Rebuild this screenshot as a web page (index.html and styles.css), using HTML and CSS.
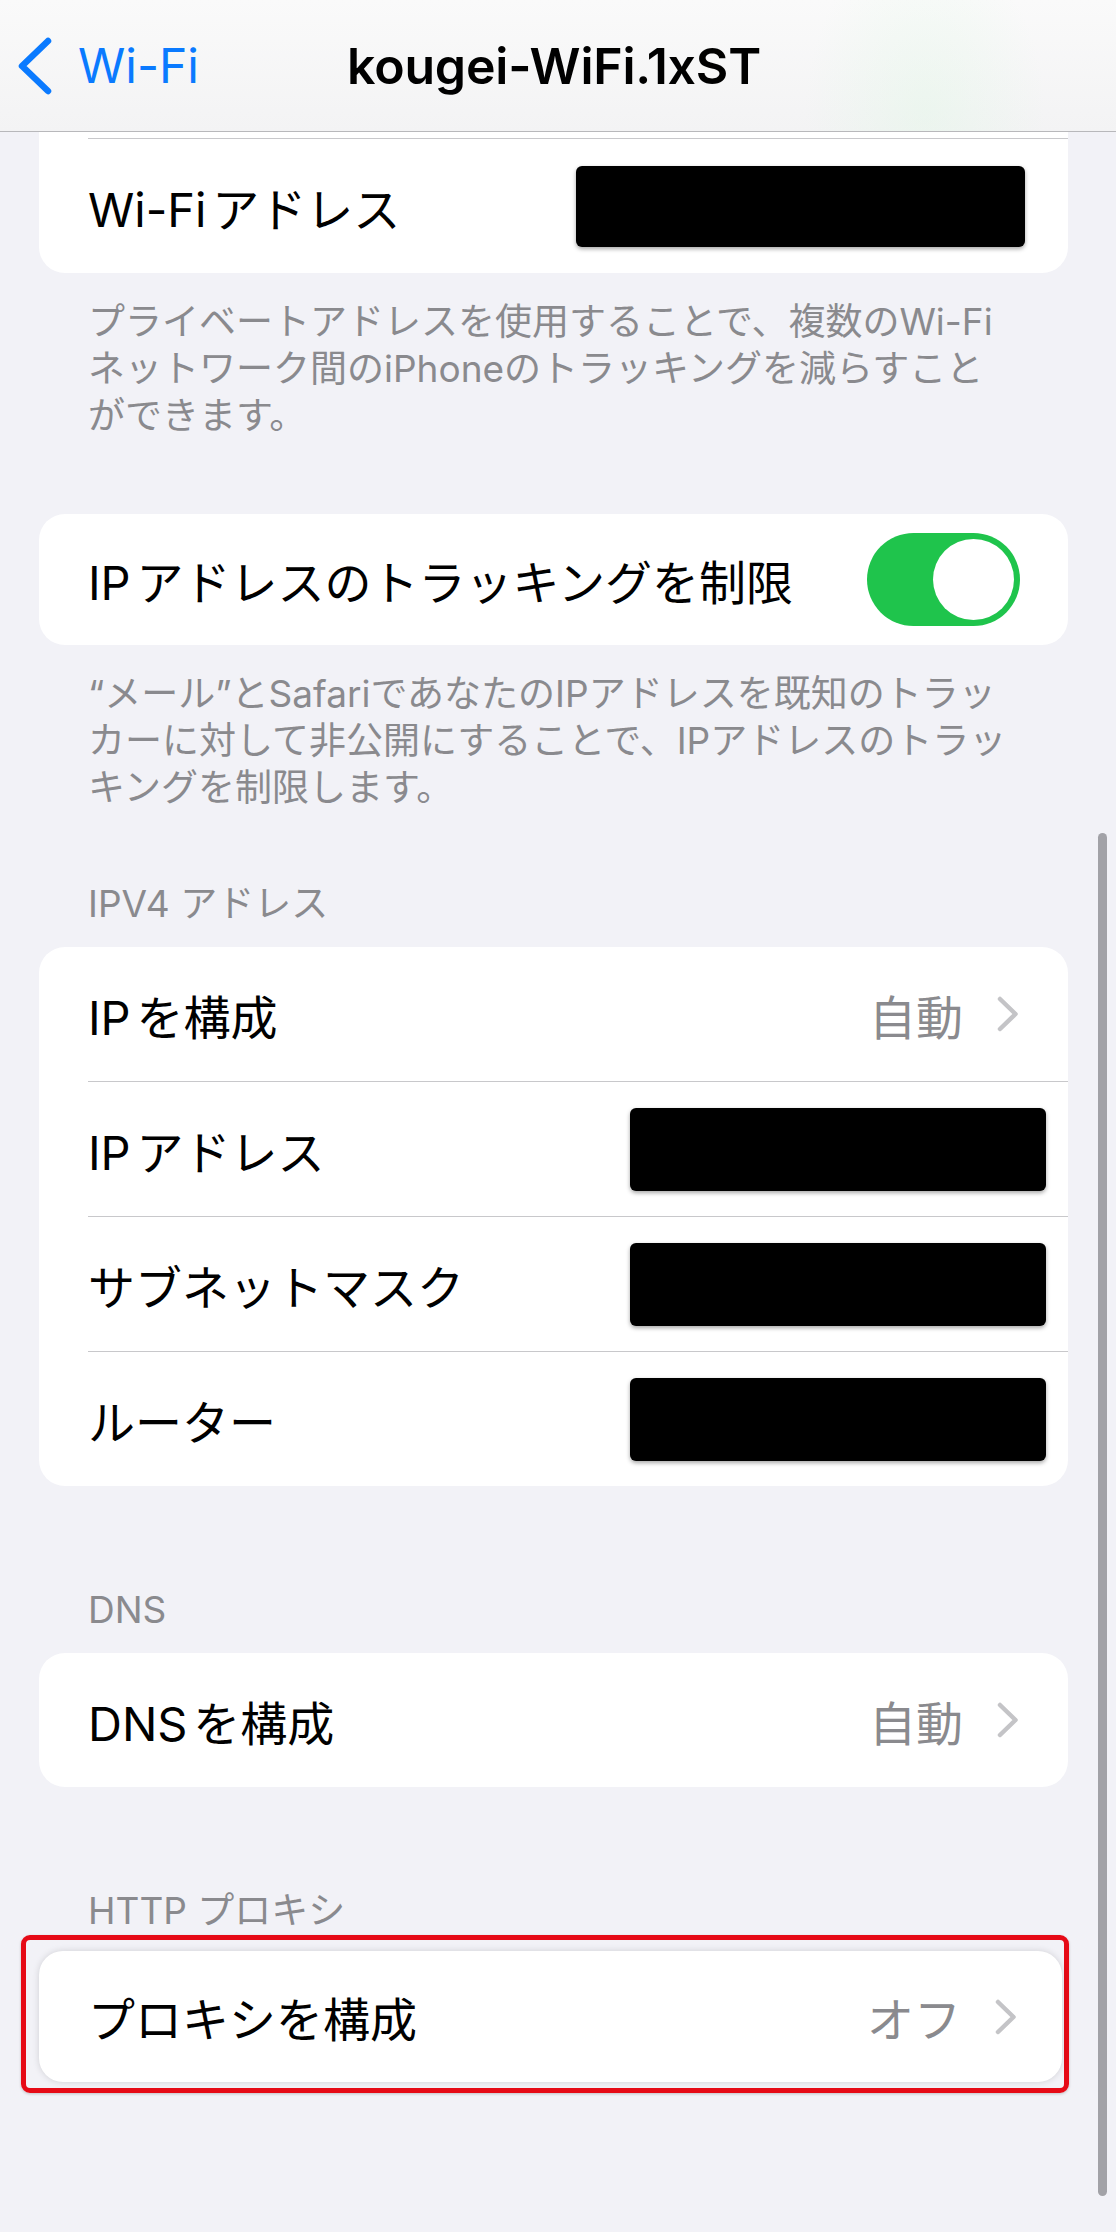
FILE: index.html
```html
<!DOCTYPE html>
<html lang="ja">
<head>
    <meta charset="UTF-8">
    <meta name="viewport" content="width=device-width, initial-scale=1.0">
    <title>kougei-WiFi.1xST</title>
    <link rel="stylesheet" href="styles.css">
</head>
<body>
    <header class="navbar">
        <a class="back" href="#">
            <svg class="back-icon" width="36" height="58" viewBox="0 0 36 58"><path d="M31 4 L5 29 L31 54"/></svg>
            <span>Wi-Fi</span>
        </a>
        <h1 class="title">kougei-WiFi.1xST</h1>
    </header>

    <main class="content">
        <section class="section">
            <div class="group group-cut">
                <div class="row">
                    <span class="label">Wi-Fiアドレス</span>
                    <span class="redact redact-wide"></span>
                </div>
            </div>
            <p class="note">プライベートアドレスを使用することで、複数のWi-Fi<br>ネットワーク間のiPhoneのトラッキングを減らすこと<br>ができます。</p>
        </section>

        <section class="section after-note first-note">
            <div class="group">
                <div class="row row-toggle">
                    <span class="label">IPアドレスのトラッキングを制限</span>
                    <span class="switch"><span class="knob"></span></span>
                </div>
            </div>
            <p class="note">“メール”とSafariであなたのIPアドレスを既知のトラッ<br>カーに対して非公開にすることで、IPアドレスのトラッ<br>キングを制限します。</p>
        </section>

        <section class="section after-note">
            <h2 class="header">IPV4 アドレス</h2>
            <div class="group">
                <div class="row">
                    <span class="label">IPを構成</span>
                    <span class="value">自動</span>
                    <svg class="chevron" width="22" height="36" viewBox="0 0 22 36"><path d="M3 3 L18.5 18 L3 33"/></svg>
                </div>
                <div class="row">
                    <span class="label">IPアドレス</span>
                    <span class="redact"></span>
                </div>
                <div class="row">
                    <span class="label">サブネットマスク</span>
                    <span class="redact"></span>
                </div>
                <div class="row">
                    <span class="label">ルーター</span>
                    <span class="redact"></span>
                </div>
            </div>
        </section>

        <section class="section">
            <h2 class="header">DNS</h2>
            <div class="group">
                <div class="row">
                    <span class="label">DNSを構成</span>
                    <span class="value">自動</span>
                    <svg class="chevron" width="22" height="36" viewBox="0 0 22 36"><path d="M3 3 L18.5 18 L3 33"/></svg>
                </div>
            </div>
        </section>

        <section class="section">
            <h2 class="header header-marked">HTTP プロキシ</h2>
            <div class="highlight">
                <div class="group group-marked">
                    <div class="row row-toggle">
                        <span class="label">プロキシを構成</span>
                        <span class="value">オフ</span>
                        <svg class="chevron" width="22" height="36" viewBox="0 0 22 36"><path d="M3 3 L18.5 18 L3 33"/></svg>
                    </div>
                </div>
            </div>
        </section>
    </main>

    <div class="scrollbar"></div>
</body>
</html>
```

FILE: styles.css
```css
* {
    box-sizing: border-box;
}

body {
    margin: 0;
    width: 1116px;
    height: 2232px;
    overflow: hidden;
    position: relative;
    background-color: #f2f2f7;
    font-family: Inter, "Noto Sans CJK JP", sans-serif;
    color: #000;
}

/* nav bar */
.navbar {
    height: 132px;
    border-bottom: 1px solid #b8b8bb;
    background:
        radial-gradient(ellipse 120px 170px at 925px 110px, rgba(220, 248, 226, 0.35), rgba(220, 248, 226, 0)),
        linear-gradient(#fafafa, #f3f3f4);
    display: grid;
    grid-template-columns: 1fr auto 1fr;
    align-items: center;
}

.back {
    display: flex;
    align-items: center;
    gap: 25px;
    padding-left: 17px;
    color: #0a7aff;
    text-decoration: none;
    font-size: 48px;
}

.back-icon path {
    fill: none;
    stroke: #0a7aff;
    stroke-width: 6.5;
    stroke-linecap: round;
    stroke-linejoin: round;
}

.title {
    margin: 0 0 0 -8px;
    font-size: 50px;
    font-weight: 600;
    letter-spacing: -0.2px;
}

/* list */
.content {
    padding: 0 48px 0 39px;
}

.section {
    margin-top: 100px;
}

.section:first-child {
    margin-top: 0;
}

.section.after-note {
    margin-top: 69px;
}

.section.first-note {
    margin-top: 75px;
}

.header {
    margin: 0;
    padding: 0 0 20px 49px;
    font-size: 37px;
    line-height: 47px;
    font-weight: 400;
    color: #8a8a8e;
}

.header-marked {
    padding-bottom: 1px;
}

.group {
    background-color: #fff;
    border-radius: 26px;
    overflow: hidden;
}

.group-cut {
    border-radius: 0 0 26px 26px;
    padding-top: 6px;
}

.row {
    display: flex;
    align-items: center;
    height: 134px;
    margin-left: 49px;
    padding-right: 22px;
    font-size: 47px;
}

.row + .row,
.group-cut .row {
    height: 135px;
    border-top: 1px solid #c8c8cb;
}

.row-toggle {
    height: 131px;
}

.label {
    flex: 1;
    text-autospace: normal;
}

.value {
    color: #8a8a8e;
    margin-right: 34px;
}

.chevron {
    margin-right: 27px;
}

.chevron path {
    fill: none;
    stroke: #c4c4c7;
    stroke-width: 4.5;
    stroke-linecap: round;
    stroke-linejoin: round;
}

.redact {
    width: 416px;
    height: 83px;
    background-color: #000;
    border-radius: 6px;
    box-shadow: 0 2px 4px rgba(0, 0, 0, 0.35);
}

.redact-wide {
    width: 449px;
    height: 81px;
    margin-right: 21px;
}

.switch {
    display: flex;
    justify-content: flex-end;
    width: 153px;
    height: 93px;
    padding: 6px;
    margin-right: 26px;
    border-radius: 47px;
    background-color: #1fc44c;
}

.knob {
    width: 81px;
    height: 81px;
    border-radius: 50%;
    background-color: #fff;
}

.note {
    margin: 0;
    padding: 25px 0 0 49px;
    font-size: 37px;
    line-height: 47px;
    color: #8a8a8e;
}

/* red marker round the proxy row */
.highlight {
    width: 1048px;
    margin-left: -18px;
    padding: 11px 2px 6px 13px;
    border: 5px solid #e60a16;
    border-radius: 9px;
    box-shadow: 0 1px 3px rgba(0, 0, 0, 0.2);
}

.group-marked {
    border-radius: 24px;
    box-shadow: 0 0 7px rgba(0, 0, 0, 0.14);
}

.highlight .chevron {
    margin-right: 23px;
}

.scrollbar {
    position: absolute;
    left: 1098px;
    top: 833px;
    width: 9px;
    height: 1363px;
    border-radius: 5px;
    background-color: #a2a2a7;
}
```
